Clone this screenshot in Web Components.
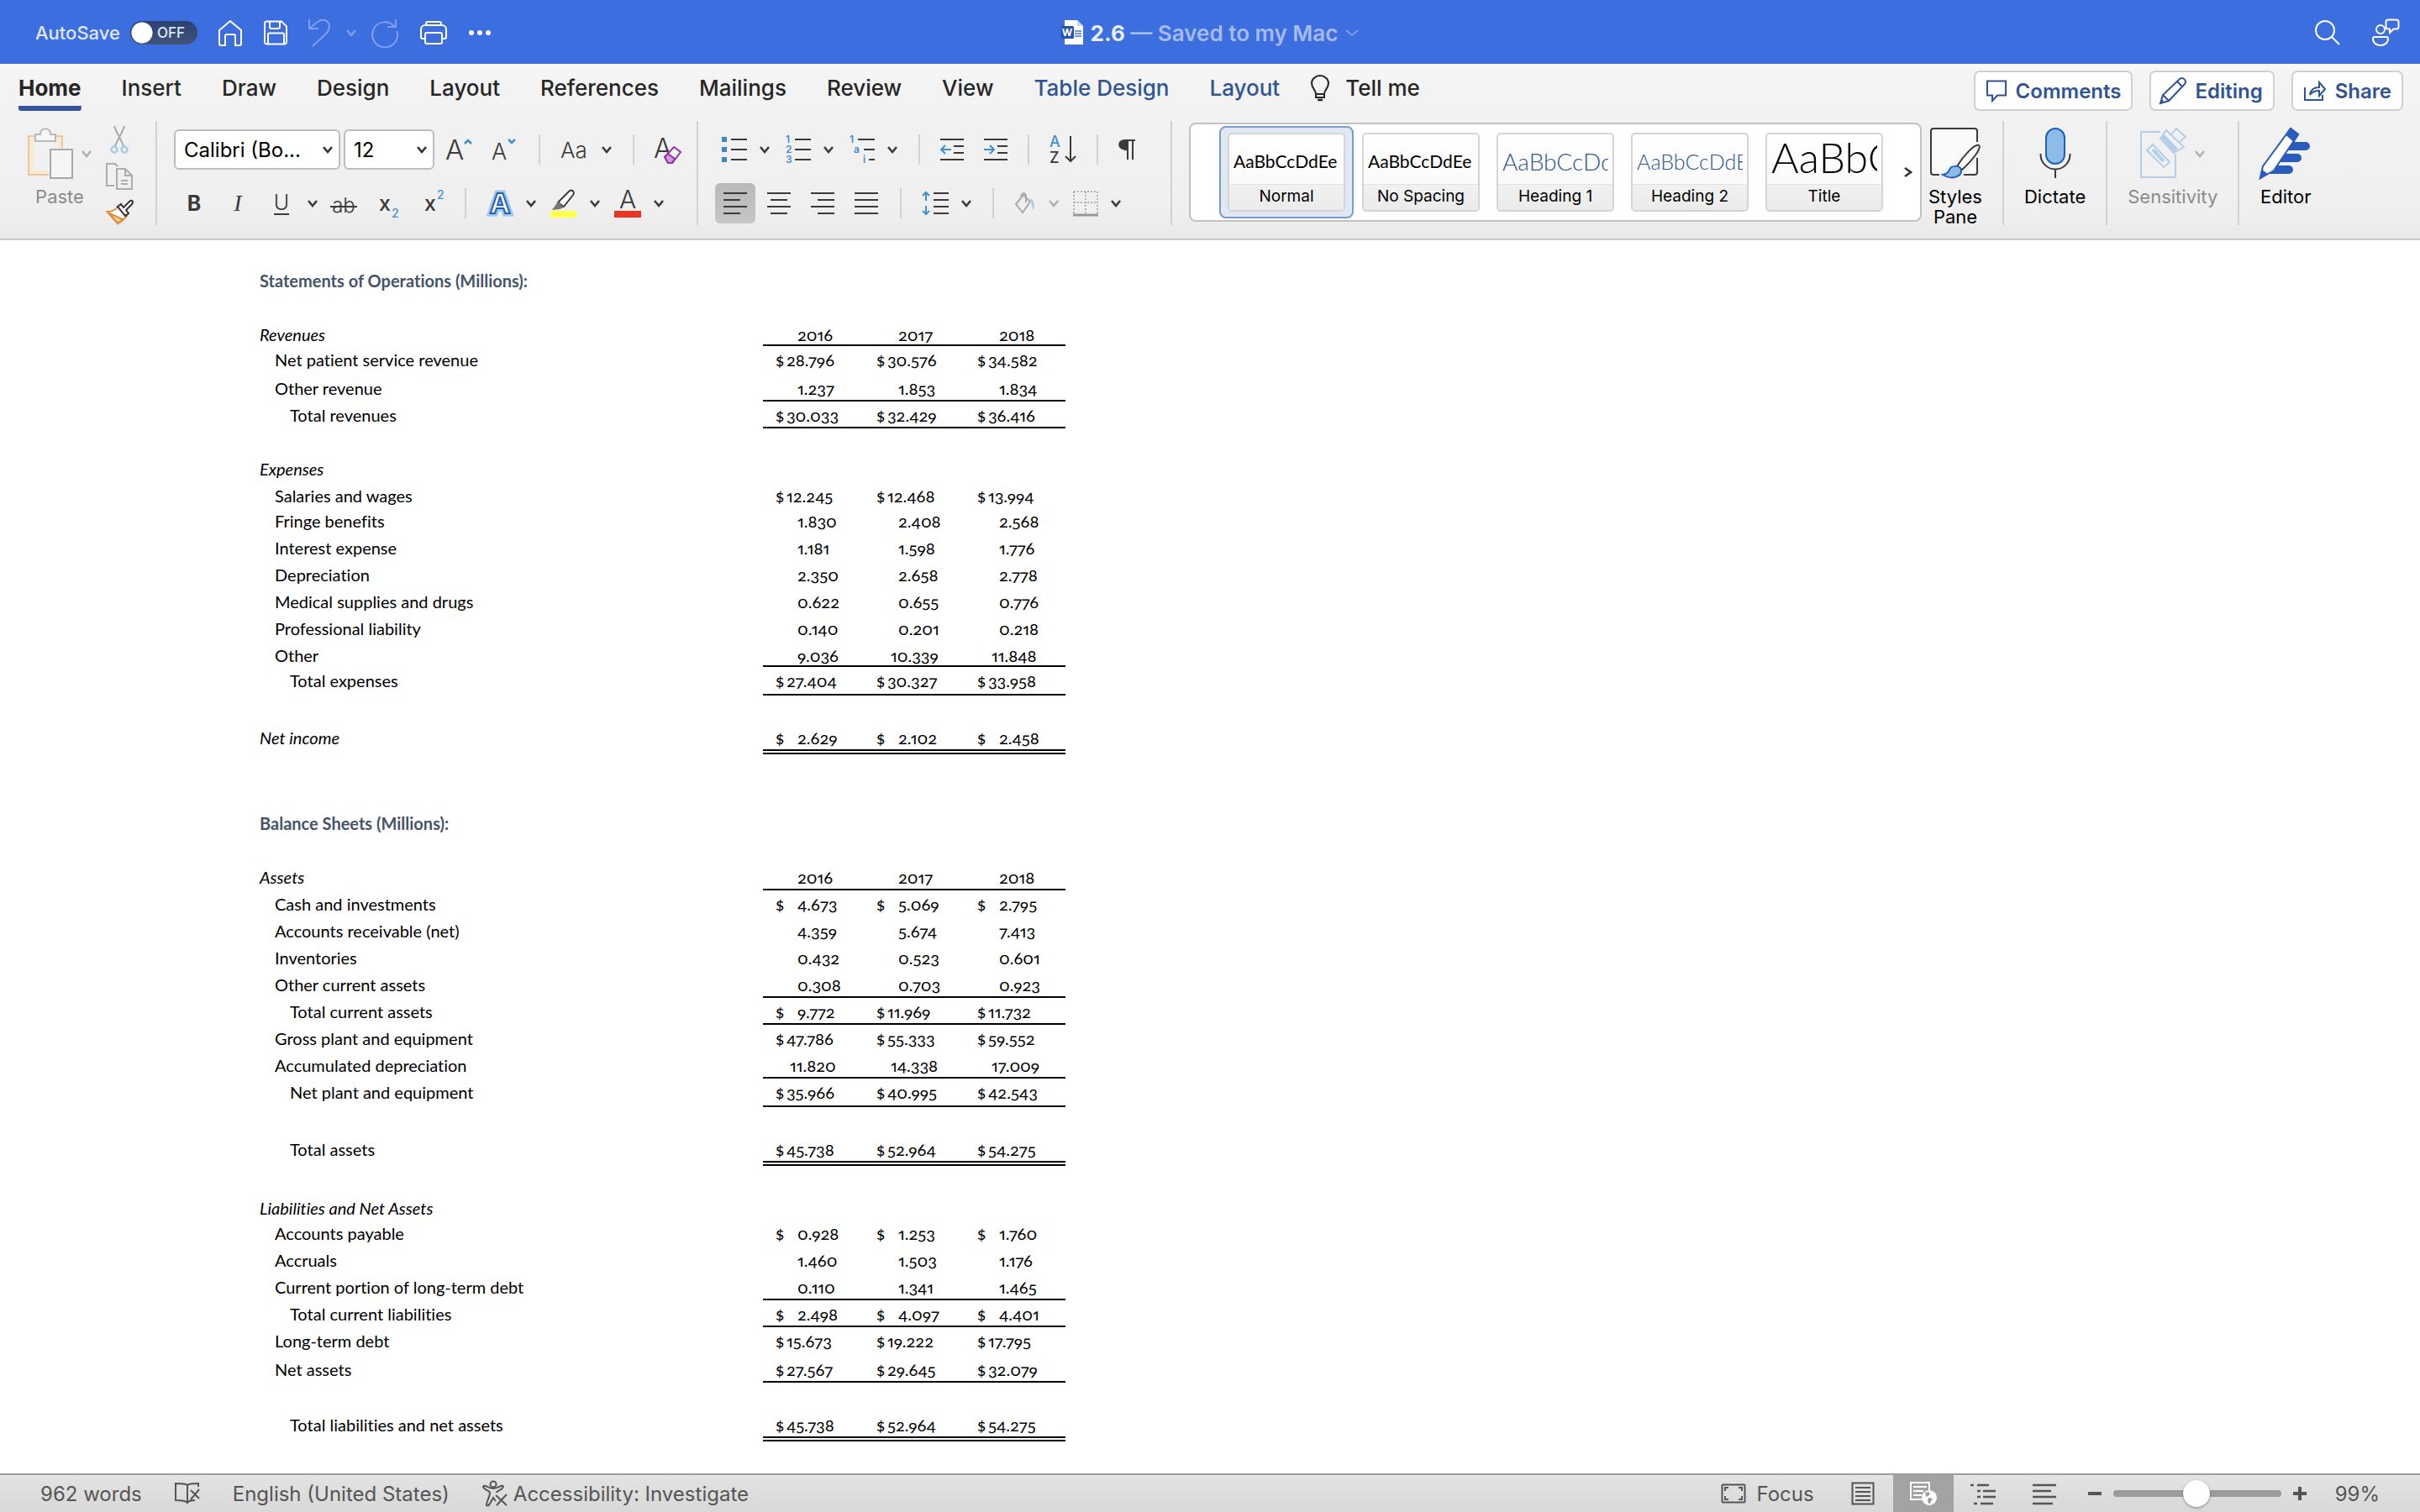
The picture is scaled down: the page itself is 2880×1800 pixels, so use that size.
<!DOCTYPE html>
<html lang="en">
<head>
<meta charset="utf-8">
<title>2.6</title>
<style>
    html, body { height: 100%; }
    body {
        margin: 0;
        font-family: Inter, "Liberation Sans", sans-serif;
        color: #262626;
        background: #fff;
    }
</style>
</head>
<body>
<word-window></word-window>

<script>
// name: [width, height, svg content]
const ICONS = {
    home: [30, 32, '<path d="M2 13 15 2l13 11v16a2 2 0 0 1-2 2h-5V20a2 2 0 0 0-2-2h-8a2 2 0 0 0-2 2v11H4a2 2 0 0 1-2-2z"/>'],
    save: [30, 30, '<path d="M4 1.500h18l6 6V26a2.500 2.500 0 0 1-2.500 2.500h-21A2.500 2.500 0 0 1 2 26V4a2.500 2.500 0 0 1 2-2.500zM8 2v6a2 2 0 0 0 2 2h8a2 2 0 0 0 2-2V2M6 28V17a1.500 1.500 0 0 1 1.500-1.500h16A1.500 1.500 0 0 1 25 17v11"/>'],
    undo: [28, 34, '<path d="M1 1v11h11M1.500 11.500 11 4C18-1 25 3 25 10c0 4-2 6-4 8L5 33"/>'],
    redo: [34, 34, '<path d="M30 1v9H20M28.500 9.500A15 15 0 1 0 31.500 15"/>'],
    print: [34, 30, '<path d="M8 6V4a2 2 0 0 1 2-2h14a2 2 0 0 1 2 2v2M7 22H4a2 2 0 0 1-2-2v-9a5 5 0 0 1 5-5h20a5 5 0 0 1 5 5v9a2 2 0 0 1-2 2h-3M9 15h16a2 2 0 0 1 2 2v9a2 2 0 0 1-2 2H9a2 2 0 0 1-2-2v-9a2 2 0 0 1 2-2z"/>'],
    dots: [28, 8, '<g fill="currentColor" stroke="none"><circle cx="4" cy="4" r="3"/><circle cx="14" cy="4" r="3"/><circle cx="24" cy="4" r="3"/></g>'],
    wordfile: [28, 32, '<path d="M5 1h15l7 7v22H5z" fill="#fff" stroke="none"/><path d="M20 1v7h7z" fill="#c9d6ee" stroke="none"/><path d="M17 14h8M17 17h8M17 20h8" stroke="#3b78cf" stroke-width="1.500"/><rect x="1" y="8" width="15" height="15" rx="1.500" fill="#2055ac" stroke="none"/><text x="8" y="20" font-size="12" font-weight="700" text-anchor="middle" fill="#fff" stroke="none">W</text>'],
    search: [32, 30, '<circle cx="13" cy="12" r="11"/><path d="m21 20 9 9"/>'],
    presence: [34, 34, '<circle cx="11" cy="13" r="5"/><path d="M4 22h14a2 2 0 0 1 2 2c0 5-4 8-9 8s-9-3-9-8a2 2 0 0 1 2-2zM20 1.500h10a2.500 2.500 0 0 1 2.500 2.500v6a2.500 2.500 0 0 1-2.500 2.500h-3.500L22 17v-4.500h-2a2.500 2.500 0 0 1-2.500-2.500V4A2.500 2.500 0 0 1 20 1.500z"/>'],
    chevron: [14, 10, '<path d="m2 2 5 6 5-6" stroke-width="2.600"/>'],
    chevthin: [18, 10, '<path d="m2 2 7 6 7-6"/>'],
    right: [12, 14, '<path d="m2 2 7 5-7 5" stroke-width="2.600"/>'],
    bulb: [24, 32, '<path d="M7 23c0-5-5-7-5-13a10 9 0 0 1 20 0c0 6-5 8-5 13zM7 23v4h10v-4" /><path d="M9 30h6" stroke-width="2.500"/>'],
    comment: [26, 26, '<path d="M2 1.500h22v17H14L8 25v-6.500H2z"/>'],
    pencil: [30, 34, '<path d="m-1 32 3-10L22 3c4-3 9 2 6 6L9 29zM2 22l7 7M19 6l6 6M-1 32l3-4"/>'],
    share: [28, 26, '<path d="M2 9v15h21v-6"/><path d="M8 18c1-7 5-9 11-9V3l7 8-7 8v-6c-5 0-8 1-11 5z"/>'],
    paste: [56, 64, '<path d="M26 56.500H3v-45h39V26h-5V16H8v36h18z" fill="#f6ead0" stroke="none"/><path d="M26 57H2V11h40v14" stroke="#f0c4a0"/><path d="M11 9h5c-1-9 13-9 12 0h6v8H10V9z" fill="#f5f5f5" stroke="#b9b9b9"/><path d="M28 27h26v34H28z" fill="#f5f5f5" stroke="#a8a8a8"/>'],
    cut: [32, 34, '<path d="M10 0c1 5 9 18 11 24M22 0c-1 5-9 18-11 24" stroke="#a8a8a8"/><circle cx="10" cy="28" r="3.500" stroke="#a9cbe8" stroke-width="2.500"/><circle cx="22" cy="28" r="3.500" stroke="#a9cbe8" stroke-width="2.500"/>'],
    copy: [34, 34, '<path d="M10 27H1V1h10l3 3" stroke="#adadad"/><path d="M13 7h10l8 8v16H13zM23 7v8h8M18 21h8M18 25h8" stroke="#adadad"/>'],
    brush: [34, 30, '<path d="M14 8C11 13 6 14 1.500 14L14 28c4-2 8-5 11-9z" fill="#fff" stroke="#e3893a"/><path d="m4 16 16 7-6 5z" fill="#f6d78c" stroke="#e3893a"/><path d="m14 8 4-3 3 4 7-7c3-3 5 0 3 3l-7 7 3 4-4 3z" fill="#fff" stroke="#333"/>'],
    grow: [32, 32, '<text x="-1" y="28" font-size="33" font-weight="300" fill="#3a3a3a" stroke="none">A</text><path d="m22 9 4-4 4 4" stroke="#3f8fd2" stroke-width="2.500"/>'],
    shrink: [32, 32, '<text x="0" y="28" font-size="27" font-weight="300" fill="#3a3a3a" stroke="none">A</text><path d="m20 4 4 4 4-4" stroke="#3f8fd2" stroke-width="2.500"/>'],
    textcase: [34, 32, '<text x="0" y="26" font-size="26" font-weight="300" fill="#3a3a3a" stroke="none">Aa</text>'],
    eraser: [34, 34, '<text x="-1" y="27" font-size="32" font-weight="300" fill="#3a3a3a" stroke="none">A</text><path d="m12 26 11-12 8 6-10 13h-5z" fill="#f5f5f5" stroke="#9135a3"/><path d="m12 26 4-4 8 6-3 5h-5z" fill="#cf9bd8" stroke="#9135a3"/>'],
    bold: [32, 32, '<text x="16" y="25" font-size="25" font-weight="700" text-anchor="middle" fill="#3a3a3a" stroke="none">B</text>'],
    italic: [32, 32, '<text x="16" y="25" font-size="28" font-style="italic" font-family="Liberation Serif" text-anchor="middle" fill="#3a3a3a" stroke="none">I</text>'],
    underline: [32, 32, '<text x="16" y="24" font-size="25" font-weight="300" text-anchor="middle" fill="#3a3a3a" stroke="none">U</text><path d="M7 29h18" stroke="#3a3a3a"/>'],
    strike: [34, 32, '<text x="17" y="27" font-size="24" font-weight="300" text-anchor="middle" fill="#3a3a3a" stroke="none">ab</text><path d="M1 20h32" stroke="#3a3a3a"/>'],
    sub: [32, 34, '<text x="4" y="26" font-size="25" font-weight="500" fill="#3a3a3a" stroke="none">x</text><text x="19" y="34" font-size="14" font-weight="500" fill="#3f8fd2" stroke="none">2</text>'],
    sup: [32, 34, '<text x="4" y="26" font-size="25" font-weight="500" fill="#3a3a3a" stroke="none">x</text><text x="19" y="12" font-size="14" font-weight="500" fill="#3f8fd2" stroke="none">2</text>'],
    effects: [32, 32, '<text x="16" y="28" font-size="33" font-weight="700" text-anchor="middle" fill="#fff" stroke="#9cc7ee" stroke-width="7" paint-order="stroke">A</text><text x="16" y="28" font-size="33" font-weight="700" text-anchor="middle" fill="#fff" stroke="#1f62b5" stroke-width="2">A</text>'],
    marker: [32, 34, '<path d="M9 16 22 3c3-3 8 0 5 4L16 21z" fill="#fff" stroke="#3a3a3a"/><path d="m9 15 7 7-5 2-9 1z" fill="#777" stroke="none"/><path d="M0 26h31v8H0z" fill="#ffff4d" stroke="none"/>'],
    fontcolor: [32, 34, '<text x="16" y="23" font-size="30" font-weight="300" text-anchor="middle" fill="#3a3a3a" stroke="none">A</text><path d="M0 26h32v8H0z" fill="#ea3323" stroke="none"/>'],
    bullets: [30, 32, '<path d="M0 1h6v6H0zM0 13h6v6H0zM0 25h6v6H0z" fill="#3a85cb" stroke="none"/><path d="M11 4h19M11 16h19M11 28h19" stroke="#3a3a3a"/>'],
    numbers: [30, 34, '<g font-size="12" font-weight="600" fill="#3f8fd2" stroke="none"><text x="0" y="9">1</text><text x="0" y="21">2</text><text x="0" y="33">3</text></g><path d="M11 5h19M11 17h19M11 29h19" stroke="#3a3a3a"/>'],
    multi: [30, 34, '<g font-size="12" font-weight="600" fill="#3f8fd2" stroke="none"><text x="0" y="9">1</text><text x="5" y="21">a</text><text x="16" y="33">i</text></g><path d="M10 5h20M17 17h13M23 29h7" stroke="#3a3a3a"/>'],
    outdent: [28, 28, '<path d="M0 2h28M16 10h12M16 18h12M0 26h28" stroke="#3a3a3a"/><path d="M13 14H1m5-5-5 5 5 5" stroke="#3f8fd2"/>'],
    indent: [28, 28, '<path d="M0 2h28M16 10h12M16 18h12M0 26h28" stroke="#3a3a3a"/><path d="M0 14h12M7 9l5 5-5 5" stroke="#3f8fd2"/>'],
    sort: [32, 34, '<text x="0" y="14" font-size="18" font-weight="500" fill="#3f8fd2" stroke="none">A</text><text x="0" y="33" font-size="18" font-weight="500" fill="#3a3a3a" stroke="none">Z</text><path d="M25 1v30m-6-6 6 6 6-6" stroke="#3a3a3a"/>'],
    pilcrow: [22, 28, '<path d="M20 3H9M11 2v24M17 2v24" stroke="#3a3a3a"/><path d="M12 2v13C-3 16-3 2 8 2z" fill="#3a3a3a" stroke="none"/>'],
    left: [28, 28, '<path d="M0 2h28M0 10h20M0 18h28M0 26h20" stroke="#3a3a3a"/>'],
    center: [28, 28, '<path d="M0 2h28M4 10h20M0 18h28M4 26h20" stroke="#3a3a3a"/>'],
    alignright: [28, 28, '<path d="M0 2h28M8 10h20M0 18h28M8 26h20" stroke="#3a3a3a"/>'],
    justify: [28, 28, '<path d="M0 2h28M0 10h28M0 18h28M0 26h28" stroke="#3a3a3a"/>'],
    spacing: [32, 30, '<path d="M14 3h18M14 11h18M14 19h18M14 27h18" stroke="#3a3a3a"/><path d="M5 2v10M1 6l4-4 4 4M5 18v10m-4-4 4 4 4-4" stroke="#3f8fd2"/>'],
    bucket: [26, 26, '<path d="m2 14 9-11 8 8-9 13zM8 7c0-7 6-8 6-2v7" stroke="#ababab"/><path d="M18 7c5 1 7 6 5 14-3-4-1-9-5-14z" fill="#a9cbe8" stroke="none"/>'],
    borders: [30, 32, '<path d="M1 2h28M1 15h28M1 2v26M15 2v26M29 2v26" stroke="#b3b3b3" stroke-dasharray="2 2"/><path d="M0 30h30" stroke="#999" stroke-width="3"/>'],
    styles: [60, 62, '<path d="M11 56H4a3 3 0 0 1-3-3V4a3 3 0 0 1 3-3h49a3 3 0 0 1 3 3v13M56 36v17a3 3 0 0 1-3 3H40" fill="#fafafa" stroke="#3a3a3a"/><path d="M32 46C40 33 53 19 58 21c4 3-8 18-20 29z" fill="#fafafa" stroke="#3a3a3a"/><path d="M15 56c5-1 7-3 8-6 2-5 12-6 14 0 1 8-11 13-22 6z" fill="#8fbbe8" stroke="#1f62b5"/>'],
    mic: [38, 62, '<rect x="8" y="1" width="22" height="42" rx="11" fill="#8fbbe8" stroke="#1f62b5"/><path d="M1.500 31v1a17.500 17.500 0 0 0 35 0v-1M19 50v10" stroke="#3a3a3a"/>'],
    label: [56, 62, '<g stroke="#b3cfe8"><path d="M24 5H1v54h41V31"/><path d="m15 20 20 21-7 6L8 27z"/><path d="m15 26 13 14" stroke-width="4"/><path d="m31 3 21 20-12 7-16-17z"/><path d="m25 12 4-4 16 17-5 5z" fill="#b3cfe8" stroke="none"/><path d="m37 8 6-7 11 10-8 7"/></g>'],
    editor: [62, 62, '<path d="M30 17h25a5 5 0 0 1 0 10H24zM24 31h21a5 5 0 0 1 0 10H18zM18 45h17a5 5 0 0 1 0 10H12z" fill="#2a5cbd" stroke="none"/><path d="m1 60 3-14L37 1l9 7-29 43z" fill="#fff" stroke="#2a5cbd"/><path d="m37 1 9 7-5 8-9-8zM1 60l2-9 5 4z" fill="#2a5cbd" stroke="#2a5cbd"/>'],
    proof: [32, 28, '<path d="M16 4c-2-2-8-2-14-2v20c6 0 12 0 14 3 2-3 7-3 9-3M16 4v22M16 4c2-2 7-2 13-2v4M20 10l10 10M30 9 20 21"/>'],
    access: [32, 32, '<circle cx="14" cy="5" r="3.500"/><path d="M2 7c0 5 8 5 8 8 0 6-5 12-4 15 3 2 5-4 8-9l3 4M26 7c0 5-8 5-8 8M17 18l13 12M30 17 18 30M2 7c3-2 5 3 12 3s9-5 12-3"/>'],
    focus: [30, 24, '<rect x="1.500" y="1.500" width="27" height="21" rx="1"/><path d="M5 9V5h4M21 5h4v4M25 15v4h-4M9 19H5v-4"/>'],
    printview: [28, 28, '<path d="M1.500 1.500h25v25h-25zM5 7h18M5 12h18M5 17h18M5 22h18"/>'],
    webview: [34, 30, '<path d="M15 22H2V2h22v9M5 7h16M5 12h12M5 17h10"/><circle cx="24" cy="20" r="9" fill="#fff" stroke="none"/><path d="M19 14c4-2 7 0 5 3l-4 2zM23 20l5 1-4 7-2-4z" fill="#9e9e9e" stroke="none"/>'],
    outline: [32, 28, '<path d="M0 4h4M8 4h14M8 11h4M15 11h15M8 18h4M15 18h15M4 26h4M12 26h15" stroke-width="2.500"/>'],
    draft: [28, 28, '<path d="M0 4h28M0 11h22M0 18h28M0 26h24" stroke-width="2.500"/>'],
    minus: [16, 16, '<path d="M0 8h16" stroke-width="4"/>'],
    plus: [16, 16, '<path d="M0 8h16M8 0v16" stroke-width="4"/>']
};

customElements.define('app-icon', class extends HTMLElement {
    connectedCallback() {
        const [w, h, body] = ICONS[this.getAttribute('name')];
        const shadowRoot = this.attachShadow({ mode: 'open' });
        shadowRoot.innerHTML = `
            <style>
                :host { display: block; flex: none; }
                svg { display: block; overflow: visible; font-family: Inter, sans-serif; }
            </style>
            <svg width="${w}" height="${h}" viewBox="0 0 ${w} ${h}" fill="none" stroke="currentColor" stroke-width="2" aria-hidden="true">${body}</svg>
        `;
    }
});

// Button that shows one icon. With the "menu" attribute it gets a drop-down arrow next to it.
customElements.define('tool-button', class extends HTMLElement {
    connectedCallback() {
        const label = this.getAttribute('label');
        const menu = this.hasAttribute('menu')
            ? `<button aria-label="${label} options"><app-icon name="chevron"></app-icon></button>` : '';
        const shadowRoot = this.attachShadow({ mode: 'open' });
        shadowRoot.innerHTML = `
            <style>
                :host { display: flex; align-items: center; gap: 14px; color: #3a3a3a; flex: none; }
                :host([disabled]) { color: #b0b0b0; }
                button { border: 0; padding: 0; background: none; color: inherit; display: flex; justify-content: center; align-items: center; }
                :host([pad]) button:first-of-type { width: 48px; height: 48px; border-radius: 6px; }
                :host([pad]) { gap: 6px; }
                :host([pressed]) button:first-of-type { background: linear-gradient(#b9b9b9, #c6c6c6); }
            </style>
            <button aria-label="${label}"><app-icon name="${this.getAttribute('icon')}"></app-icon></button>${menu}
        `;
    }
});

// Row of tools, gap in pixels
customElements.define('tool-row', class extends HTMLElement {
    connectedCallback() {
        const shadowRoot = this.attachShadow({ mode: 'open' });
        shadowRoot.innerHTML = `
            <style>
                :host { display: flex; align-items: center; gap: ${this.getAttribute('gap') || 24}px; }
                ::slotted(hr) { width: 2px; height: 36px; margin: 0; border: 0; background: #d2d2d2; flex: none; }
            </style>
            <slot></slot>
        `;
    }
});

customElements.define('tool-select', class extends HTMLElement {
    connectedCallback() {
        const shadowRoot = this.attachShadow({ mode: 'open' });
        shadowRoot.innerHTML = `
            <style>
                :host { display: grid; align-items: center; flex: none; width: 198px; }
                :host([narrow]) { width: 108px; }
                select, app-icon { grid-area: 1 / 1; }
                select {
                    appearance: none; width: 100%; height: 48px; padding: 0 10px;
                    font: 24px Inter, sans-serif; color: #000;
                    background: #fff; border: 2px solid #bdbdbd; border-radius: 6px;
                }
                app-icon { justify-self: end; padding-right: 8px; color: #333; pointer-events: none; }
            </style>
            <select aria-label="${this.getAttribute('label')}"><option>${this.getAttribute('value')}</option></select>
            <app-icon name="chevron"></app-icon>
        `;
    }
});

customElements.define('big-tool', class extends HTMLElement {
    connectedCallback() {
        const menu = this.hasAttribute('menu') ? '<app-icon name="chevron"></app-icon>' : '';
        const shadowRoot = this.attachShadow({ mode: 'open' });
        shadowRoot.innerHTML = `
            <style>
                :host { display: block; flex: none; color: #000; }
                :host([disabled]) { color: #8b8b8b; }
                button {
                    display: flex; flex-direction: column; align-items: center; gap: 8px;
                    border: 0; padding: 8px 0 0; background: none; color: inherit;
                    font: 22px/24px Inter, sans-serif;
                }
                .art { display: flex; align-items: center; gap: 8px; height: 62px; }
                .art app-icon + app-icon { color: #b0b0b0; }
            </style>
            <button><span class="art"><app-icon name="${this.getAttribute('icon')}"></app-icon>${menu}</span><span><slot></slot></span></button>
        `;
    }
});

customElements.define('style-card', class extends HTMLElement {
    connectedCallback() {
        const shadowRoot = this.attachShadow({ mode: 'open' });
        shadowRoot.innerHTML = `
            <style>
                :host { display: block; flex: none; padding: 6px 8px; border: 2px solid transparent; border-radius: 8px; }
                :host([selected]) { border-color: #7d9acb; background: #e2e8f3; }
                button {
                    display: flex; flex-direction: column; box-sizing: border-box; width: 140px; height: 94px; padding: 0; overflow: hidden;
                    border: 2px solid #d4d4d4; border-radius: 5px; background: linear-gradient(#fff, #f8f8f8);
                    color: #000; font: 20px/24px Inter, sans-serif;
                }
                .sample {
                    height: 60px; margin: 0 5px; overflow: hidden; white-space: nowrap; text-align: left;
                    font: 21px/64px Lato, sans-serif; align-self: stretch;
                }
                :host([kind="h1"]) .sample { font-size: 28px; font-weight: 300; color: #2f5496; }
                :host([kind="h2"]) .sample { font-size: 25px; font-weight: 300; color: #2f5496; }
                :host([kind="title"]) .sample { font-size: 50px; font-weight: 300; line-height: 54px; }
                .name { align-self: stretch; height: 30px; line-height: 28px; font-size: 19px; background: linear-gradient(#f1f1f1, #ebebeb); border-top: 1px solid #e4e4e4; }
            </style>
            <button><span class="sample">AaBbCcDdEe</span><span class="name"><slot></slot></span></button>
        `;
    }
});

customElements.define('pill-button', class extends HTMLElement {
    connectedCallback() {
        const shadowRoot = this.attachShadow({ mode: 'open' });
        shadowRoot.innerHTML = `
            <style>
                :host { display: block; }
                button {
                    display: flex; align-items: center; gap: 10px; height: 48px; padding: 0 12px;
                    border: 2px solid #d0d0d0; border-radius: 7px; background: #fff;
                    color: #2f5496; font: 600 24px Inter, sans-serif;
                }
            </style>
            <button><app-icon name="${this.getAttribute('icon')}"></app-icon><slot></slot></button>
        `;
    }
});

customElements.define('title-bar', class extends HTMLElement {
    constructor() {
        super();
        const shadowRoot = this.attachShadow({ mode: 'open' });
        shadowRoot.innerHTML = `
            <style>
                :host {
                    display: grid; grid-template-columns: 1fr auto 1fr; align-items: center;
                    height: 76px; padding: 2px 24px 0; background: #3c6ee0; color: #fff; box-sizing: border-box;
                }
                div { display: flex; align-items: center; }
                .left { gap: 24px; padding-left: 18px; }
                .right { justify-content: flex-end; gap: 36px; }
                label { display: flex; align-items: center; gap: 12px; font-size: 22px; font-weight: 500; color: #dfe7fa; }
                .switch { display: grid; align-items: center; }
                .switch * { grid-area: 1 / 1; }
                input {
                    appearance: none; width: 80px; height: 28px; margin: 0; border-radius: 14px;
                    background: radial-gradient(circle at 14px 14px, #fff 12px, transparent 13px), linear-gradient(#2b4170, #425379);
                }
                .switch span { font-size: 17px; padding-left: 32px; font-weight: 500; pointer-events: none; }
                button { border: 0; padding: 0; background: none; color: #fff; }
                .faded { color: #7f9fea; }
                .title { gap: 8px; font-size: 26px; font-weight: 600; color: #a5bbf0; }
                b { color: #e9effc; font-weight: 700; }
                .undo { gap: 16px; }
            </style>
            <div class="left">
                <label>AutoSave
                    <span class="switch"><input type="checkbox" role="switch"><span>OFF</span></span>
                </label>
                <button aria-label="Home"><app-icon name="home"></app-icon></button>
                <button aria-label="Save"><app-icon name="save"></app-icon></button>
                <div class="undo">
                    <button class="faded" aria-label="Undo"><app-icon name="undo"></app-icon></button>
                    <button class="faded" aria-label="Undo history"><app-icon name="chevron"></app-icon></button>
                    <button class="faded" aria-label="Redo"><app-icon name="redo"></app-icon></button>
                </div>
                <button aria-label="Print"><app-icon name="print"></app-icon></button>
                <button aria-label="More"><app-icon name="dots"></app-icon></button>
            </div>
            <div class="title">
                <app-icon name="wordfile"></app-icon>
                <span><b>2.6</b> — Saved to my Mac</span>
                <button class="faded" aria-label="Rename"><app-icon name="chevthin"></app-icon></button>
            </div>
            <div class="right">
                <button aria-label="Search"><app-icon name="search"></app-icon></button>
                <button aria-label="Presence"><app-icon name="presence"></app-icon></button>
            </div>
        `;
    }
});

customElements.define('tab-bar', class extends HTMLElement {
    constructor() {
        super();
        const tabs = ['Home', 'Insert', 'Draw', 'Design', 'Layout', 'References', 'Mailings', 'Review', 'View', '*Table Design', '*Layout'];
        const shadowRoot = this.attachShadow({ mode: 'open' });
        shadowRoot.innerHTML = `
            <style>
                :host { display: flex; justify-content: space-between; padding: 8px 20px 0 22px; }
                nav { display: flex; gap: 48px; align-items: flex-start; }
                nav button {
                    display: flex; align-items: center; gap: 18px; height: 48px; padding: 0 0 6px; border: 0; background: none;
                    font: 500 26px/42px Inter, sans-serif; color: #262626; box-sizing: border-box;
                }
                nav button.on { font-weight: 700; background: linear-gradient(#35569b, #35569b) bottom / 100% 6px no-repeat; border-radius: 3px; }
                nav button.context { color: #2f5496; }
                nav .tell { margin-left: -12px; }
                .actions { display: flex; gap: 20px; }
            </style>
            <nav>
                ${tabs.map((t, i) => `<button class="${i === 0 ? 'on' : t[0] === '*' ? 'context' : ''}">${t.replace('*', '')}</button>`).join('')}
                <button class="tell"><app-icon name="bulb"></app-icon>Tell me</button>
            </nav>
            <div class="actions">
                <pill-button icon="comment">Comments</pill-button>
                <pill-button icon="pencil">Editing</pill-button>
                <pill-button icon="share">Share</pill-button>
            </div>
        `;
    }
});

customElements.define('ribbon-bar', class extends HTMLElement {
    constructor() {
        super();
        const shadowRoot = this.attachShadow({ mode: 'open' });
        shadowRoot.innerHTML = `
            <style>
                :host { display: flex; align-items: flex-start; padding: 12px 0 14px 32px; }
                .rule { width: 2px; height: 124px; background: #d2d2d2; flex: none; }
                .clip { display: flex; gap: 16px; width: 153px; }
                .clip .stack { display: flex; flex-direction: column; gap: 10px; padding-top: 6px; }
                .group { display: flex; flex-direction: column; gap: 16px; padding-top: 10px; box-sizing: border-box; }
                .group > tool-row { height: 48px; }
                .font { width: 642px; padding-left: 20px; }
                .para { width: 562px; padding-left: 20px; }
                .para > tool-row:first-child { padding-left: 8px; }
                .gallery {
                    display: flex; align-items: center; box-sizing: border-box; height: 118px; margin: 2px 8px 0 20px; padding-left: 34px;
                    border: 2px solid #c2c2c2; border-radius: 8px; background: #fff; flex: none;
                }
                .gallery button { border: 0; padding: 0 8px 0 14px; background: none; color: #333; }
                .side { display: flex; gap: 24px; }
            </style>
            <div class="clip">
                <big-tool icon="paste" menu disabled>Paste</big-tool>
                <div class="stack">
                    <tool-button icon="cut" label="Cut"></tool-button>
                    <tool-button icon="copy" label="Copy"></tool-button>
                    <tool-button icon="brush" label="Format painter"></tool-button>
                </div>
            </div>
            <div class="rule"></div>
            <div class="group font">
                <tool-row gap="24">
                    <tool-row gap="14">
                        <tool-row gap="4">
                            <tool-select label="Font" value="Calibri (Bo..."></tool-select>
                            <tool-select label="Font size" value="12" narrow></tool-select>
                        </tool-row>
                        <tool-row gap="22">
                            <tool-button icon="grow" label="Increase font size"></tool-button>
                            <tool-button icon="shrink" label="Decrease font size"></tool-button>
                        </tool-row>
                    </tool-row>
                    <hr>
                    <tool-button icon="textcase" label="Change case" menu></tool-button>
                    <hr>
                    <tool-button icon="eraser" label="Clear formatting"></tool-button>
                </tool-row>
                <tool-row gap="24">
                    <tool-row gap="12">
                        <tool-row gap="6">
                            <tool-row gap="4">
                                <tool-button pad icon="bold" label="Bold"></tool-button>
                                <tool-button pad icon="italic" label="Italic"></tool-button>
                                <tool-button pad icon="underline" label="Underline" menu></tool-button>
                            </tool-row>
                            <tool-button pad icon="strike" label="Strikethrough"></tool-button>
                            <tool-button pad icon="sub" label="Subscript"></tool-button>
                            <tool-button pad icon="sup" label="Superscript"></tool-button>
                        </tool-row>
                        <hr>
                    </tool-row>
                    <tool-row gap="16">
                        <tool-button icon="effects" label="Text effects" menu></tool-button>
                        <tool-button icon="marker" label="Highlight" menu></tool-button>
                        <tool-button icon="fontcolor" label="Font colour" menu></tool-button>
                    </tool-row>
                </tool-row>
            </div>
            <div class="rule"></div>
            <div class="group para">
                <tool-row gap="24">
                    <tool-row gap="18">
                        <tool-button icon="bullets" label="Bullets" menu></tool-button>
                        <tool-button icon="numbers" label="Numbering" menu></tool-button>
                        <tool-button icon="multi" label="Multilevel list" menu></tool-button>
                    </tool-row>
                    <hr>
                    <tool-button icon="outdent" label="Decrease indent"></tool-button>
                    <tool-button icon="indent" label="Increase indent"></tool-button>
                    <hr>
                    <tool-button icon="sort" label="Sort"></tool-button>
                    <hr>
                    <tool-button icon="pilcrow" label="Show marks"></tool-button>
                </tool-row>
                <tool-row gap="24">
                    <tool-row gap="16">
                        <tool-row gap="4">
                            <tool-button pad pressed icon="left" label="Align left"></tool-button>
                            <tool-button pad icon="center" label="Centre"></tool-button>
                            <tool-button pad icon="alignright" label="Align right"></tool-button>
                            <tool-button pad icon="justify" label="Justify"></tool-button>
                        </tool-row>
                        <hr>
                    </tool-row>
                    <tool-button icon="spacing" label="Line spacing" menu></tool-button>
                    <hr>
                    <tool-row gap="16">
                        <tool-button icon="bucket" label="Shading" menu disabled></tool-button>
                        <tool-button icon="borders" label="Borders" menu></tool-button>
                    </tool-row>
                </tool-row>
            </div>
            <div class="rule"></div>
            <div class="gallery">
                <style-card selected>Normal</style-card>
                <style-card>No Spacing</style-card>
                <style-card kind="h1">Heading 1</style-card>
                <style-card kind="h2">Heading 2</style-card>
                <style-card kind="title">Title</style-card>
                <button aria-label="More styles"><app-icon name="right"></app-icon></button>
            </div>
            <div class="side">
                <big-tool icon="styles">Styles<br>Pane</big-tool>
                <div class="rule"></div>
                <big-tool icon="mic">Dictate</big-tool>
                <div class="rule"></div>
                <big-tool icon="label" menu disabled>Sensitivity</big-tool>
                <div class="rule"></div>
                <big-tool icon="editor">Editor</big-tool>
            </div>
        `;
    }
});

// Rows: [label, indent level, [three values], rule, row height]
const OPERATIONS = [
    ['Revenues', 0, ['2016', '2017', '2018'], 'line', 30],
    ['Net patient service revenue', 1, ['$28.796', '$30.576', '$34.582'], '', 34],
    ['Other revenue', 1, ['1.237', '1.853', '1.834'], 'line', 32],
    ['Total revenues', 2, ['$30.033', '$32.429', '$36.416'], 'line', 32],
    ['', 0, [], '', 32],
    ['Expenses', 0, [], '', 32],
    ['Salaries and wages', 1, ['$12.245', '$12.468', '$13.994'], '', 30],
    ['Fringe benefits', 1, ['1.830', '2.408', '2.568'], '', 32],
    ['Interest expense', 1, ['1.181', '1.598', '1.776'], '', 32],
    ['Depreciation', 1, ['2.350', '2.658', '2.778'], '', 32],
    ['Medical supplies and drugs', 1, ['0.622', '0.655', '0.776'], '', 32],
    ['Professional liability', 1, ['0.140', '0.201', '0.218'], '', 32],
    ['Other', 1, ['9.036', '10.339', '11.848'], 'line', 30],
    ['Total expenses', 2, ['$27.404', '$30.327', '$33.958'], 'line', 34],
    ['', 0, [], '', 34],
    ['Net income', 0, ['$2.629', '$2.102', '$2.458'], 'double', 36]
];

const BALANCE = [
    ['Assets', 0, ['2016', '2017', '2018'], 'line', 32],
    ['Cash and investments', 1, ['$4.673', '$5.069', '$2.795'], '', 32],
    ['Accounts receivable (net)', 1, ['4.359', '5.674', '7.413'], '', 32],
    ['Inventories', 1, ['0.432', '0.523', '0.601'], '', 32],
    ['Other current assets', 1, ['0.308', '0.703', '0.923'], 'line', 32],
    ['Total current assets', 2, ['$9.772', '$11.969', '$11.732'], 'line', 32],
    ['Gross plant and equipment', 1, ['$47.786', '$55.333', '$59.552'], '', 32],
    ['Accumulated depreciation', 1, ['11.820', '14.338', '17.009'], 'line', 32],
    ['Net plant and equipment', 2, ['$35.966', '$40.995', '$42.543'], 'line', 34],
    ['', 0, [], '', 34],
    ['Total assets', 2, ['$45.738', '$52.964', '$54.275'], 'double', 36],
    ['', 0, [], '', 34],
    ['Liabilities and Net Assets', 0, [], '', 30],
    ['Accounts payable', 1, ['$0.928', '$1.253', '$1.760'], '', 32],
    ['Accruals', 1, ['1.460', '1.503', '1.176'], '', 32],
    ['Current portion of long-term debt', 1, ['0.110', '1.341', '1.465'], 'line', 32],
    ['Total current liabilities', 2, ['$2.498', '$4.097', '$4.401'], 'line', 32],
    ['Long-term debt', 1, ['$15.673', '$19.222', '$17.795'], '', 34],
    ['Net assets', 1, ['$27.567', '$29.645', '$32.079'], 'line', 32],
    ['', 0, [], '', 34],
    ['Total liabilities and net assets', 2, ['$45.738', '$52.964', '$54.275'], 'double', 36]
];

customElements.define('finance-sheet', class extends HTMLElement {
    connectedCallback() {
        const rows = this.getAttribute('data') === 'balance' ? BALANCE : OPERATIONS;
        const cell = (v) => {
            const dollar = v[0] === '$';
            const num = v.replace('$', '');
            const wide = num.length > 5;
            return `<td class="${wide ? (dollar ? 'near' : 'mid') : 'far'}"><span>${dollar ? '$' : ''}</span>${num}</td>`;
        };
        const shadowRoot = this.attachShadow({ mode: 'open' });
        shadowRoot.innerHTML = `
            <style>
                :host { display: block; font: 20px/24px Lato, sans-serif; color: #000; font-variant-ligatures: none; }
                h2 { margin: 0; padding: 4px 0; font-size: 20px; line-height: 24px; font-weight: 700; color: #44546a; }
                table { border-collapse: separate; border-spacing: 0; margin-top: 32px; font-feature-settings: "onum", "pnum"; }
                th, td { box-sizing: border-box; padding: 4px 0 0; vertical-align: top; text-align: left; font-weight: 400; white-space: nowrap; }
                th { width: 599px; }
                td { width: 120px; padding-left: 15px; }
                .i0 th { font-style: italic; }
                .i1 th { padding-left: 18px; }
                .i2 th { padding-left: 36px; }
                .line td { border-bottom: 2px solid #000; }
                .double td { border-bottom: 6px double #000; }
                .h30 th { height: 30px; } .h32 th { height: 32px; } .h34 th { height: 34px; } .h36 th { height: 36px; }
                span { display: inline-block; }
                .near span { width: 13px; }
                .mid span { width: 17px; }
                .far span { width: 26px; }
            </style>
            <h2><slot></slot></h2>
            <table>
                ${rows.map(([label, indent, vals, rule, h]) => `
                    <tr class="i${indent} h${h} ${rule}"><th scope="row">${label}</th>${vals.map(cell).join('')}</tr>`).join('')}
            </table>
        `;
    }
});

customElements.define('status-bar', class extends HTMLElement {
    constructor() {
        super();
        const shadowRoot = this.attachShadow({ mode: 'open' });
        shadowRoot.innerHTML = `
            <style>
                :host {
                    display: flex; justify-content: space-between; box-sizing: border-box; height: 46px; padding: 0 48px;
                    border-top: 2px solid #9f9f9f; background: linear-gradient(#e3e3e3, #d8d8d8); color: #555; font-size: 24px;
                }
                div { display: flex; align-items: center; }
                .left { gap: 38px; }
                button {
                    display: flex; align-items: center; justify-content: center; gap: 12px; height: 44px;
                    border: 0; padding: 0; background: none; color: inherit; font: inherit;
                }
                .acc { gap: 6px; }
                .views button { width: 72px; }
                .views button.on { background: #a3a3a3; color: #fff; }
                .focus { margin-right: 22px; }
                .zoom { gap: 14px; padding-left: 16px; }
                .pct { margin-left: 20px; }
                input { appearance: none; width: 200px; height: 8px; margin: 0; border-radius: 4px; background: #9b9b9b; }
                input::-webkit-slider-thumb { appearance: none; width: 32px; height: 32px; border-radius: 50%; background: #fff; box-shadow: 0 1px 3px rgba(0, 0, 0, .4); }
            </style>
            <div class="left">
                <button>962 words</button>
                <button aria-label="Proofing"><app-icon name="proof"></app-icon></button>
                <button>English (United States)</button>
                <button class="acc"><app-icon name="access"></app-icon>Accessibility: Investigate</button>
            </div>
            <div>
                <button class="focus"><app-icon name="focus"></app-icon>Focus</button>
                <div class="views">
                    <button aria-label="Print layout"><app-icon name="printview"></app-icon></button>
                    <button class="on" aria-label="Web layout"><app-icon name="webview"></app-icon></button>
                    <button aria-label="Outline"><app-icon name="outline"></app-icon></button>
                    <button aria-label="Draft"><app-icon name="draft"></app-icon></button>
                </div>
                <div class="zoom">
                    <button aria-label="Zoom out"><app-icon name="minus"></app-icon></button>
                    <input type="range" min="0" max="200" value="99" aria-label="Zoom">
                    <button aria-label="Zoom in"><app-icon name="plus"></app-icon></button>
                    <button class="pct">99%</button>
                </div>
            </div>
        `;
    }
});

customElements.define('word-window', class extends HTMLElement {
    constructor() {
        super();
        const shadowRoot = this.attachShadow({ mode: 'open' });
        shadowRoot.innerHTML = `
            <style>
                :host { display: flex; flex-direction: column; min-height: 100vh; }
                header { background: linear-gradient(#f7f7f7, #f3f3f3 12%, #efefef 85%, #e9e9e9); border-bottom: 2px solid #c8c8c8; }
                main { flex: 1; padding: 32px 0 0 309px; background: #fff; }
                finance-sheet + finance-sheet { margin-top: 66px; }
            </style>
            <title-bar></title-bar>
            <header>
                <tab-bar></tab-bar>
                <ribbon-bar></ribbon-bar>
            </header>
            <main>
                <finance-sheet data="operations">Statements of Operations (Millions):</finance-sheet>
                <finance-sheet data="balance">Balance Sheets (Millions):</finance-sheet>
            </main>
            <status-bar></status-bar>
        `;
    }
});
</script>
</body>
</html>
